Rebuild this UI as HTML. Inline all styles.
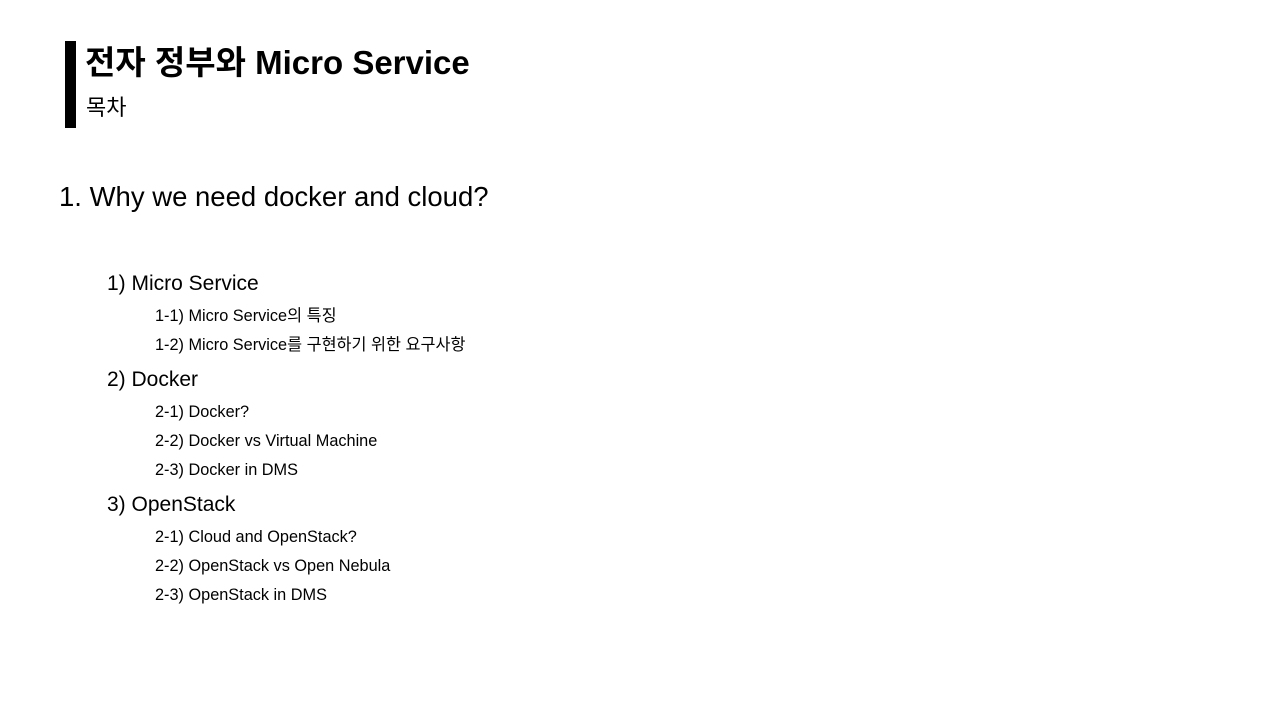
<!DOCTYPE html>
<html><head><meta charset="utf-8"><style>
body{margin:0;width:1280px;height:720px;background:#fff;position:relative;overflow:hidden;font-family:"Liberation Sans","Noto Sans CJK KR",sans-serif;color:#000}
div{position:absolute;white-space:nowrap;line-height:1}
.bar{left:65px;top:41px;width:11px;height:87px;background:#000}
.t{left:85px;top:46px;font-size:33px;font-weight:bold}
.s{left:86px;top:97px;font-size:22px}
.h{left:59px;top:183px;font-size:27.5px}
.l2{left:107px;font-size:21px}
.l3{left:155px;font-size:16.3px}
</style></head><body>
<div class="bar"></div>
<div class="t">전자 정부와 Micro Service</div>
<div class="s">목차</div>
<div class="h">1. Why we need docker and cloud?</div>
<div class="l2" style="top:273px">1) Micro Service</div>
<div class="l3" style="top:308px">1-1) Micro Service의 특징</div>
<div class="l3" style="top:337px">1-2) Micro Service를 구현하기 위한 요구사항</div>
<div class="l2" style="top:369px">2) Docker</div>
<div class="l3" style="top:404px">2-1) Docker?</div>
<div class="l3" style="top:433px">2-2) Docker vs Virtual Machine</div>
<div class="l3" style="top:462px">2-3) Docker in DMS</div>
<div class="l2" style="top:494px">3) OpenStack</div>
<div class="l3" style="top:529px">2-1) Cloud and OpenStack?</div>
<div class="l3" style="top:558px">2-2) OpenStack vs Open Nebula</div>
<div class="l3" style="top:587px">2-3) OpenStack in DMS</div>
</body></html>
